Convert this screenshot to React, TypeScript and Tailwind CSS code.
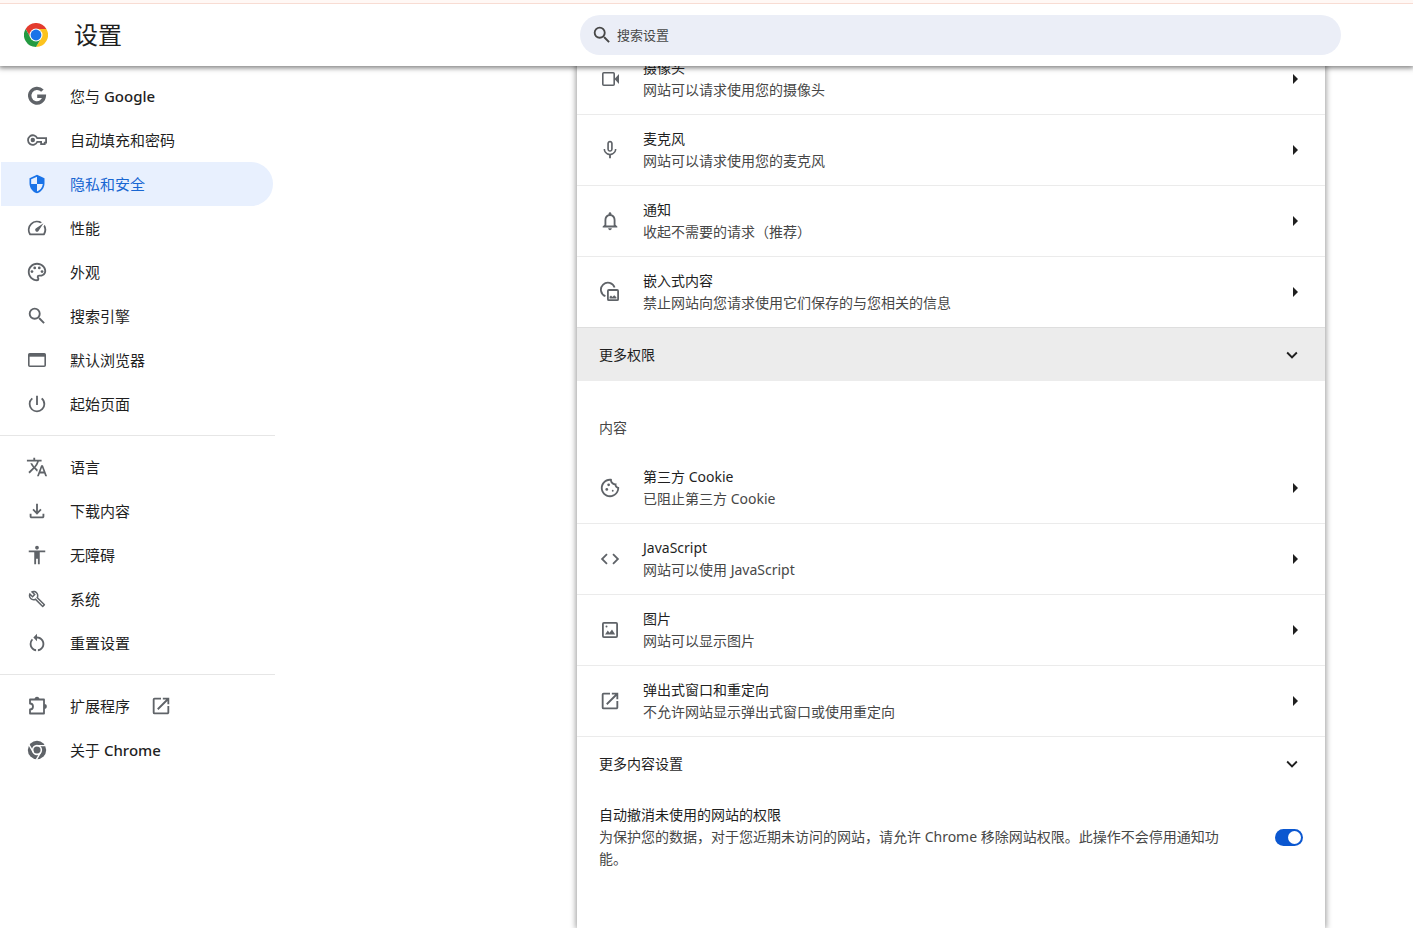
import type { ReactNode } from "react";
import {
  MdAccessibility,
  MdCode,
  MdExpandMore,
  MdMicNone,
  MdNotificationsNone,
  MdOpenInNew,
  MdOutlineBuild,
  MdOutlineCookie,
  MdOutlinePalette,
  MdOutlineSpeed,
  MdPowerSettingsNew,
  MdRestartAlt,
  MdSearch,
  MdSecurity,
  MdTranslate,
} from "react-icons/md";

type IconProps = { className?: string };

type NavItem = {
  label: string;
  brand?: string;
  icon: (props: IconProps) => ReactNode;
  active?: boolean;
  external?: boolean;
};

type SiteSetting = {
  title: string;
  description: string;
  icon: (props: IconProps) => ReactNode;
};

function ChromeLogo({ className }: IconProps) {
  return (
    <svg viewBox="0 0 48 48" className={className} aria-hidden="true">
      <path fill="#e33b2e" d="M24 12H44.8A24 24 0 0 0 3.2 12L13.6 30Z" />
      <path fill="#fcc31e" d="M34.4 30 24 48A24 24 0 0 0 44.8 12H24Z" />
      <path fill="#249a41" d="M13.6 30 3.2 12A24 24 0 0 0 24 48L34.4 30Z" />
      <circle cx="24" cy="24" r="13" fill="#fff" />
      <circle cx="24" cy="24" r="10.8" fill="#1a73e8" />
    </svg>
  );
}

function IconGoogle({ className }: IconProps) {
  return (
    <svg
      viewBox="0 0 22 22"
      fill="none"
      stroke="currentColor"
      strokeWidth="3.4"
      className={className}
    >
      <path d="M16.4 5.7A7.3 7.3 0 1 0 18.3 11.2H11.2" />
    </svg>
  );
}

function IconKey({ className }: IconProps) {
  return (
    <svg
      viewBox="0 0 22 22"
      fill="none"
      stroke="currentColor"
      strokeWidth="1.8"
      className={className}
    >
      <path d="M11.2 9.1H20.1V13.6H18.7V15.1H15.1V12.8H11.3A4.8 4.8 0 1 1 11.2 9.1Z" />
      <circle cx="6.8" cy="11" r="2.2" fill="currentColor" stroke="none" />
    </svg>
  );
}

function IconShield({ className = "" }: IconProps) {
  return <MdSecurity className={`${className} p-px`} />;
}

function IconBrowser({ className }: IconProps) {
  return (
    <svg viewBox="0 0 22 22" fill="none" stroke="currentColor" className={className}>
      <rect x="2.8" y="4.8" width="16.4" height="12.4" rx="1" strokeWidth="1.6" />
      <path d="M2.8 6.2H19.2" strokeWidth="3" />
    </svg>
  );
}

function IconDownload({ className }: IconProps) {
  return (
    <svg viewBox="0 -960 960 960" fill="currentColor" className={className}>
      <path d="M480-320 280-520l56-58 104 104v-326h80v326l104-104 56 58-200 200ZM240-160q-33 0-56.5-23.5T160-240v-120h80v120h480v-120h80v120q0 33-23.5 56.5T720-160H240Z" />
    </svg>
  );
}

function IconWrench({ className = "" }: IconProps) {
  return <MdOutlineBuild className={`${className} p-0.5`} />;
}

function IconExtension({ className }: IconProps) {
  return (
    <svg
      viewBox="0 0 22 22"
      fill="none"
      stroke="currentColor"
      strokeWidth="1.8"
      strokeLinejoin="round"
      className={className}
    >
      <path d="M4 4.5H18V18.5H4V14.5A3 3 0 0 0 4 8.5Z" />
      <path
        d="M8.6 4.3a2.4 2.6 0 0 1 4.8 0ZM18.2 9.1a2.6 2.4 0 0 1 0 4.8Z"
        fill="currentColor"
        stroke="none"
      />
    </svg>
  );
}

function IconChrome({ className }: IconProps) {
  return (
    <svg viewBox="0 0 48 48" className={className}>
      <circle cx="24" cy="24" r="20" fill="currentColor" />
      <circle cx="24" cy="24" r="9.5" fill="none" stroke="#fff" strokeWidth="3.4" />
      <path
        d="M24 14.5H43M15.8 28.7 6.3 12.3M32.2 28.7 22.7 45.2"
        stroke="#fff"
        strokeWidth="3"
      />
    </svg>
  );
}

function IconCamera({ className }: IconProps) {
  return (
    <svg viewBox="0 0 22 22" fill="currentColor" className={className}>
      <rect
        x="3.8"
        y="4.8"
        width="11.4"
        height="12.4"
        rx="1"
        fill="none"
        stroke="currentColor"
        strokeWidth="1.6"
      />
      <path d="M15.5 11 20 6V16Z" />
    </svg>
  );
}

function IconEmbedded({ className }: IconProps) {
  return (
    <svg
      viewBox="0 0 22 22"
      fill="none"
      stroke="currentColor"
      strokeWidth="1.8"
      className={className}
    >
      <path d="M6.4 15.2A7 7 0 1 1 15.6 6.6" />
      <rect x="8.9" y="9" width="10.2" height="10.2" rx="1" />
      <path
        d="M10.6 17.4V15.8L12 14.6 13.4 16 15.2 14.2 17.4 16.2V17.4Z"
        fill="currentColor"
        stroke="none"
      />
    </svg>
  );
}

function IconImage({ className }: IconProps) {
  return (
    <svg viewBox="0 0 22 22" fill="currentColor" className={className}>
      <rect
        x="3.9"
        y="3.9"
        width="14.2"
        height="14.2"
        rx="1"
        fill="none"
        stroke="currentColor"
        strokeWidth="1.8"
      />
      <circle cx="7.5" cy="7.5" r="1" />
      <path d="M6 15.5 8.8 11.5 10.5 13.7 13 10.5 16.2 15.5Z" />
    </svg>
  );
}

const navGroups: NavItem[][] = [
  [
    { label: "您与", brand: "Google", icon: IconGoogle },
    { label: "自动填充和密码", icon: IconKey },
    { label: "隐私和安全", icon: IconShield, active: true },
    { label: "性能", icon: MdOutlineSpeed },
    { label: "外观", icon: MdOutlinePalette },
    { label: "搜索引擎", icon: MdSearch },
    { label: "默认浏览器", icon: IconBrowser },
    { label: "起始页面", icon: MdPowerSettingsNew },
  ],
  [
    { label: "语言", icon: MdTranslate },
    { label: "下载内容", icon: IconDownload },
    { label: "无障碍", icon: MdAccessibility },
    { label: "系统", icon: IconWrench },
    { label: "重置设置", icon: MdRestartAlt },
  ],
  [
    { label: "扩展程序", icon: IconExtension, external: true },
    { label: "关于", brand: "Chrome", icon: IconChrome },
  ],
];

const permissions: SiteSetting[] = [
  {
    title: "摄像头",
    description: "网站可以请求使用您的摄像头",
    icon: IconCamera,
  },
  {
    title: "麦克风",
    description: "网站可以请求使用您的麦克风",
    icon: MdMicNone,
  },
  {
    title: "通知",
    description: "收起不需要的请求（推荐）",
    icon: MdNotificationsNone,
  },
  {
    title: "嵌入式内容",
    description: "禁止网站向您请求使用它们保存的与您相关的信息",
    icon: IconEmbedded,
  },
];

const contentSettings: SiteSetting[] = [
  {
    title: "第三方 Cookie",
    description: "已阻止第三方 Cookie",
    icon: MdOutlineCookie,
  },
  {
    title: "JavaScript",
    description: "网站可以使用 JavaScript",
    icon: MdCode,
  },
  {
    title: "图片",
    description: "网站可以显示图片",
    icon: IconImage,
  },
  {
    title: "弹出式窗口和重定向",
    description: "不允许网站显示弹出式窗口或使用重定向",
    icon: MdOpenInNew,
  },
];

function SettingRow({ title, description, icon: Icon }: SiteSetting) {
  return (
    <button
      type="button"
      className="flex w-full items-center gap-[22px] px-[22px] py-[13px] text-left"
    >
      <Icon className="size-[22px] shrink-0 text-[#5f6368]" />
      <span className="min-w-0 flex-1">
        <span className="block text-[#1f1f1f]">{title}</span>
        <span className="block text-[#474747]">{description}</span>
      </span>
      <svg
        viewBox="0 0 16 16"
        fill="currentColor"
        className="size-4 shrink-0 text-[#1f1f1f]"
        aria-hidden="true"
      >
        <path d="M6 3v10l5-5z" />
      </svg>
    </button>
  );
}

function ExpandButton({ label }: { label: string }) {
  return (
    <button
      type="button"
      className="flex h-[53px] w-full items-center justify-between px-[22px] text-left text-[#1f1f1f]"
    >
      {label}
      <MdExpandMore className="size-[22px]" />
    </button>
  );
}

export default function App() {
  return (
    <div className="flex min-h-screen flex-col overflow-hidden bg-white font-['Noto_Sans','Noto_Sans_CJK_SC',sans-serif] text-[14px] leading-[22px] text-[#1f1f1f]">
      <div className="relative z-20 h-1 border-b border-[#f8dcd3] bg-[#fff8f5]" />

      <header className="relative z-10 flex h-[62px] items-center bg-white pl-6 pr-[72px] shadow-[0_1px_5px_1px_rgba(0,0,0,0.5)]">
        <ChromeLogo className="size-6 shrink-0" />
        <h1 className="ml-[26px] shrink-0 text-2xl text-[#1f1f1f]">设置</h1>
        <label className="ml-auto flex h-10 w-full max-w-[761px] items-center gap-1 rounded-full bg-[#ebeef7] px-[11px]">
          <MdSearch className="size-[22px] shrink-0 text-[#474747]" />
          <input
            type="search"
            placeholder="搜索设置"
            aria-label="搜索设置"
            className="min-w-0 flex-1 bg-transparent text-[13px] outline-none placeholder:text-[#474747]"
          />
        </label>
      </header>

      <div className="flex flex-1">
        <nav className="w-[275px] shrink-0 pt-2 text-[15px]">
          {navGroups.map((group, index) => (
            <ul
              key={index}
              className={index > 0 ? "mt-[9px] border-t border-[#e6e6e6] pt-[9px]" : ""}
            >
              {group.map((item) => {
                const Icon = item.icon;
                return (
                  <li key={item.label} className="pl-px pr-0.5">
                    <a
                      href="#"
                      className={
                        item.active
                          ? "flex h-11 items-center rounded-r-full bg-[#e8f0fe] pl-[25px] text-[#1967d2]"
                          : "flex h-11 items-center pl-[25px] text-[#1f1f1f]"
                      }
                    >
                      <Icon
                        className={
                          item.active
                            ? "size-[22px] text-[#1a73e8]"
                            : "size-[22px] text-[#5f6368]"
                        }
                      />
                      <span className="ml-[22px]">
                        {item.label}
                        {item.brand && <span className="font-medium"> {item.brand}</span>}
                      </span>
                      {item.external && (
                        <MdOpenInNew className="ml-5 size-[22px] text-[#5f6368]" />
                      )}
                    </a>
                  </li>
                );
              })}
            </ul>
          ))}
        </nav>

        <main className="flex min-w-0 flex-1 justify-end pr-[88px]">
          {/* list is scrolled, so the first row starts under the header */}
          <section className="-mt-[22px] w-full max-w-[748px] bg-white shadow-[0_0_6px_1px_rgba(0,0,0,0.4)]">
            <div className="divide-y divide-[#ebebeb]">
              {permissions.map((item) => (
                <SettingRow key={item.title} {...item} />
              ))}
            </div>
            <div className="border-t border-[#dedede] bg-[#ececec]">
              <ExpandButton label="更多权限" />
            </div>

            <h2 className="px-[22px] pb-[14px] pt-9 text-[#474747]">内容</h2>
            <div className="divide-y divide-[#ebebeb] border-b border-[#ebebeb]">
              {contentSettings.map((item) => (
                <SettingRow key={item.title} {...item} />
              ))}
            </div>
            <ExpandButton label="更多内容设置" />

            <label className="flex items-center gap-11 px-[22px] pt-[14px]">
              <span className="flex-1">
                <span className="block text-[#1f1f1f]">自动撤消未使用的网站的权限</span>
                <span className="block text-[#474747]">
                  为保护您的数据，对于您近期未访问的网站，请允许 Chrome
                  移除网站权限。此操作不会停用通知功能。
                </span>
              </span>
              <input
                type="checkbox"
                role="switch"
                defaultChecked
                className="flex h-[17px] w-7 shrink-0 appearance-none items-center rounded-full bg-[#c7c7c7] px-0.5 before:size-[13px] before:rounded-full before:bg-white checked:justify-end checked:bg-[#0b57d0]"
              />
            </label>
          </section>
        </main>
      </div>
    </div>
  );
}
